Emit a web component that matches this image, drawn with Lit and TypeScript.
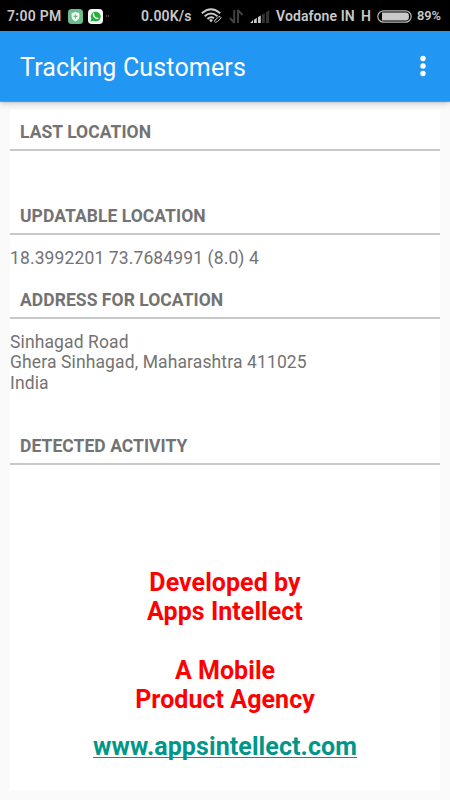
import { LitElement, html, css } from "lit";
import { customElement, property } from "lit/decorators.js";

@customElement("status-bar")
class StatusBar extends LitElement {
  static styles = css`
    :host { display: flex; align-items: center; height: 31px; box-sizing: border-box; background: #000; color: #c9c9c9; font-size: 14px; font-weight: 600; line-height: 16px; padding: 1px 8px 0 7px; white-space: nowrap; }
    svg { display: block; flex: none; }
    .time { width: 55px; letter-spacing: 0.3px; }
    .shield { margin-left: 6px; }
    .chat { margin-left: 5px; }
    .dots { margin-left: 3px; }
    .speed { margin-left: auto; width: 51px; letter-spacing: 0.2px; }
    .wifi { margin-left: 9px; }
    .data { margin-left: 7px; }
    .signal { margin-left: 6px; }
    .carrier { margin-left: 6px; width: 79px; letter-spacing: 0.1px; }
    .net { margin-left: 6px; width: 10px; }
    .battery { margin-left: 6px; }
    .level { margin-left: 5px; width: 25px; font-size: 12.8px; letter-spacing: -0.1px; }
  `;
  render() {
    return html`
      <span class="time">7:00 PM</span>
      <svg class="shield" width="15" height="15" viewBox="0 0 15 15">
        <rect width="15" height="15" rx="3.5" fill="#6cbd8b" />
        <path d="M7.5 2.8 Q9.3 4 11.4 4 V7.8 Q11 11 7.5 12.4 Q4 11 3.6 7.8 V4 Q5.7 4 7.5 2.8 Z" fill="#f4fff8" />
        <path d="M7.5 5.4 V9.4 M5.5 7.4 H9.5" stroke="#6cbd8b" stroke-width="1.4" />
      </svg>
      <svg class="chat" width="15" height="15" viewBox="0 0 15 15">
        <rect width="15" height="15" rx="3.8" fill="#f6f6f6" />
        <path d="M2.5 12.6 L3.4 9.8 A4.9 4.9 0 1 1 5.3 11.8 Z" fill="#20b038" />
        <path d="M5.6 5 Q5 6.2 6.6 8 Q8.6 10 9.9 9.2" fill="none" stroke="#fff" stroke-width="1.5" stroke-linecap="round" />
      </svg>
      <svg class="dots" width="4" height="2" viewBox="0 0 4 2"><path d="M0 1 H1 M2 1 H3" stroke="#999" /></svg>
      <span class="speed">0.00K/s</span>
      <svg class="wifi" width="21" height="16" viewBox="0 0 21 16" fill="none" stroke="#c9c9c9" stroke-width="1.9">
        <path d="M.8 5.2 Q10 -2.8 19.2 5.2" />
        <path d="M3.6 8.2 Q10 2.7 16.4 8.2" />
        <path d="M6.5 11 Q10 8 13 10.3" />
        <path d="M8 12 L10 11 L12 12 L10 14.6 Z" fill="#c9c9c9" stroke="none" />
        <path d="M13.8 12.2 L17.5 8.9 Q19.5 8 20 9.5 Q20 10.6 16.2 13.7 Q14.3 15 13.5 13.7 Q13.3 12.8 15 11.4" stroke-width="1" />
      </svg>
      <svg class="data" width="15" height="15" viewBox="0 0 15 15" fill="none" stroke="#404040" stroke-width="2">
        <path d="M5.2 1 V14 M5.5 14 L1 9" /><path d="M9 14 V1 M8.7 1 L13.5 6" />
      </svg>
      <svg class="signal" width="20" height="13" viewBox="0 0 20 13">
        <path d="M0 13 L3 10 V13 Z M4 9.8 L6.8 7.8 V13 H4 Z M8 7 L10.8 5.4 V13 H8 Z" fill="#c9c9c9" />
        <path d="M12 4.8 L14.8 3 V13 H12 Z M16 2.2 L19.2 0 V13 H16 Z" fill="#343434" />
      </svg>
      <span class="carrier">Vodafone IN</span><span class="net">H</span>
      <svg class="battery" width="35" height="13" viewBox="0 0 35 13">
        <rect x=".8" y=".8" width="33.4" height="11.4" rx="5.7" fill="none" stroke="#b8b8b8" stroke-width="1.2" />
        <path d="M5 2.6 H29 Q32 2.6 32 6.5 Q32 10.4 29 10.4 H5 Z" fill="#c9c9c9" />
      </svg>
      <span class="level">89%</span>
    `;
  }
}

@customElement("info-section")
class InfoSection extends LitElement {
  @property() heading = "";
  @property() text = "";
  static styles = css`
    :host { display: block; }
    .heading { height: 39px; box-sizing: border-box; border-bottom: 2px solid #c8c8c8; padding: 10px 10px 0; font-size: 17.5px; letter-spacing: 0.05px; line-height: 21px; font-weight: 700; color: #737373; }
    .body { padding-top: var(--body-gap, 12.5px); white-space: pre-line; font-size: 17.5px; letter-spacing: 0.12px; line-height: 20.7px; color: #737373; }
  `;
  render() {
    return html`<div class="heading">${this.heading}</div><div class="body">${this.text}</div>`;
  }
}

@customElement("app-root")
class AppRoot extends LitElement {
  static styles = css`
    :host { display: flex; flex-direction: column; height: 800px; background: #fafafa; font-family: Roboto, sans-serif; overflow: hidden; }
    .bar { flex: none; height: 70px; display: flex; align-items: center; justify-content: space-between; padding: 0 24px 0 20px; background: #2196f3; color: #fff; font-size: 25px; letter-spacing: 0.16px; line-height: 30px; position: relative; box-shadow: 0 1px 1px rgba(0,0,0,.35), 0 3px 6px rgba(0,0,0,.18); }
    .title { padding-top: 3px; }
    .card { flex: none; box-sizing: border-box; height: 680px; margin: 9px 10px 10px; padding-top: 2px; background: #fff; display: flex; flex-direction: column; }
    .updatable { height: 83.6px; letter-spacing: 0; }
    .short { height: 84px; }
    .tall { height: 146px; --body-gap: 13px; }
    .last { height: 142.4px; }
    .credit { white-space: pre-line; text-align: center; color: #f00; font-weight: 700; font-size: 25px; letter-spacing: 0.05px; line-height: 29.3px; }
    .link { align-self: center; margin-top: 17.5px; color: #009688; font-weight: 700; font-size: 25px; letter-spacing: 0.09px; line-height: 30px; text-decoration: underline; text-decoration-thickness: 1.4px; text-underline-offset: 2px; text-decoration-skip-ink: none; }
  `;
  render() {
    return html`
      <status-bar></status-bar>
      <header class="bar">
        <span class="title">Tracking Customers</span>
        <svg width="6" height="22" viewBox="0 0 6 22" fill="#fff"><circle cx="3" cy="3.5" r="2.7" /><circle cx="3" cy="11" r="2.7" /><circle cx="3" cy="18.5" r="2.7" /></svg>
      </header>
      <main class="card">
        <info-section class="short" heading="LAST LOCATION"></info-section>
        <info-section class="updatable" heading="UPDATABLE LOCATION" text="18.3992201 73.7684991 (8.0) 4"></info-section>
        <info-section class="tall" heading="ADDRESS FOR LOCATION" .text=${"Sinhagad Road\nGhera Sinhagad, Maharashtra 411025\nIndia"}></info-section>
        <info-section class="last" heading="DETECTED ACTIVITY"></info-section>
        <div class="credit">${"Developed by\nApps Intellect\n\nA Mobile\nProduct Agency"}</div>
        <a class="link">www.appsintellect.com</a>
      </main>
    `;
  }
}
